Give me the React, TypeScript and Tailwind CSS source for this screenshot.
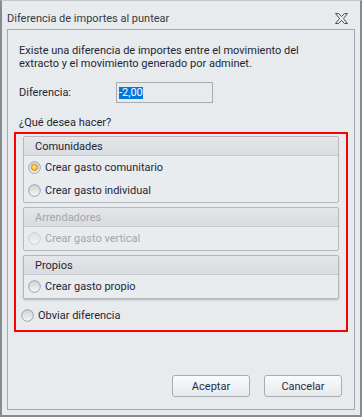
import React from "react";

function Radio({ checked = false, disabled = false }: { checked?: boolean; disabled?: boolean }) {
  const id = React.useId().replace(/:/g, "");
  return (
    <svg width="13" height="13" viewBox="0 0 13 13" className="shrink-0">
      <defs>
        <linearGradient id={`g${id}`} x1="0" y1="0" x2="0" y2="1">
          <stop offset="0" stopColor={disabled ? "#dfe1e4" : "#cfd2d6"} />
          <stop offset="1" stopColor={disabled ? "#f1f2f4" : "#f6f7f8"} />
        </linearGradient>
        <radialGradient id={`o${id}`} cx="0.45" cy="0.4" r="0.6">
          <stop offset="0" stopColor="#ffe98a" />
          <stop offset="1" stopColor="#f0a21c" />
        </radialGradient>
      </defs>
      <circle cx="6.5" cy="6.5" r="5.8" fill={`url(#g${id})`} stroke={disabled ? "#c9ccd0" : "#9da1a6"} strokeWidth="1" />
      {checked && <circle cx="6.5" cy="6.5" r="3.2" fill={`url(#o${id})`} stroke="#d48a10" strokeWidth="0.8" />}
    </svg>
  );
}

function RadioRow({ label, checked = false, disabled = false }: { label: string; checked?: boolean; disabled?: boolean }) {
  return (
    <div className="h-[23px] flex items-center gap-[4px] pl-[4px]">
      <Radio checked={checked} disabled={disabled} />
      <span className={disabled ? "text-[#a3a6aa]" : "text-[#1f2633]"}>{label}</span>
    </div>
  );
}

function Group({ title, disabled = false, focused = false, children }: { title: string; disabled?: boolean; focused?: boolean; children: React.ReactNode }) {
  return (
    <div
      className={`mx-[7px] border border-[#b4b8bd] rounded-[2px] bg-[#e9ecef] ${
        focused ? "shadow-[0_1px_2px_rgba(0,0,0,0.25)]" : ""
      }`}
    >
      <div className="h-[19px] border-b border-[#c6c9cd] bg-gradient-to-b from-[#e4e6e9] to-[#d9dce0] flex items-center pl-[11px]">
        <span className={disabled ? "text-[#a3a6aa]" : "text-[#1f2633]"}>{title}</span>
      </div>
      {children}
    </div>
  );
}

function Button({ label }: { label: string }) {
  return (
    <div className="w-[78px] h-[22px] border border-[#a9adb2] rounded-[3px] bg-gradient-to-b from-[#fbfbfc] to-[#e6e9ec] flex items-center justify-center text-[#1e2f4a]">
      {label}
    </div>
  );
}

export default function App() {
  return (
    <div className="w-[362px] h-[417px] bg-[#e8ebee] border-x-2 border-b-2 border-t border-x-[#878b90] border-b-[#878b90] border-t-[#c3c6ca] flex flex-col font-['Roboto',sans-serif] text-[11px] leading-[13px] text-[#1f2633]">
      <div className="h-[28px] shrink-0 flex items-start justify-between pl-[5px] pr-[12px] pt-[11px]">
        <span className="text-[#333a44]">Diferencia de importes al puntear</span>
        <svg width="13" height="11" viewBox="0 0 13 11" className="mt-[1px]">
          <polygon
            points="0.5,0.5 3.5,0.5 6.5,3.5 9.5,0.5 12.5,0.5 8.5,5.5 12.5,10.5 9.5,10.5 6.5,7.5 3.5,10.5 0.5,10.5 4.5,5.5"
            fill="none"
            stroke="#4a4f55"
            strokeWidth="1"
          />
        </svg>
      </div>
      <div className="mx-[5px] mb-[5px] flex-1 border border-[#a4a8ad] flex flex-col px-[6px] pt-[14px]">
        <p className="pl-[5px]">
          Existe una diferencia de importes entre el movimiento del
          <br />
          extracto y el movimiento generado por adminet.
        </p>
        <div className="mt-[12px] flex items-center pl-[5px]">
          <span className="w-[97px]">Diferencia:</span>
          <div className="w-[97px] h-[21px] border border-[#a8acb1] flex items-center pl-[2px]">
            <span className="bg-[#0078d7] text-white leading-[12px] h-[12px] flex items-center">-2,00</span>
          </div>
        </div>
        <p className="mt-[13px] pl-[5px]">¿Qué desea hacer?</p>
        <div className="mt-[3px] border-2 border-[#ff0000] pt-[2px] pb-[3px] flex flex-col gap-[4px]">
          <Group title="Comunidades">
            <RadioRow label="Crear gasto comunitario" checked />
            <RadioRow label="Crear gasto individual" />
          </Group>
          <Group title="Arrendadores" disabled>
            <RadioRow label="Crear gasto vertical" disabled />
          </Group>
          <Group title="Propios" focused>
            <RadioRow label="Crear gasto propio" />
          </Group>
          <div className="mt-[1px] h-[23px] flex items-center gap-[4px] pl-[5px]">
            <Radio />
            <span>Obviar diferencia</span>
          </div>
        </div>
        <div className="flex-1" />
        <div className="flex justify-end gap-[14px] pr-[6px] pb-[12px]">
          <Button label="Aceptar" />
          <Button label="Cancelar" />
        </div>
      </div>
    </div>
  );
}
